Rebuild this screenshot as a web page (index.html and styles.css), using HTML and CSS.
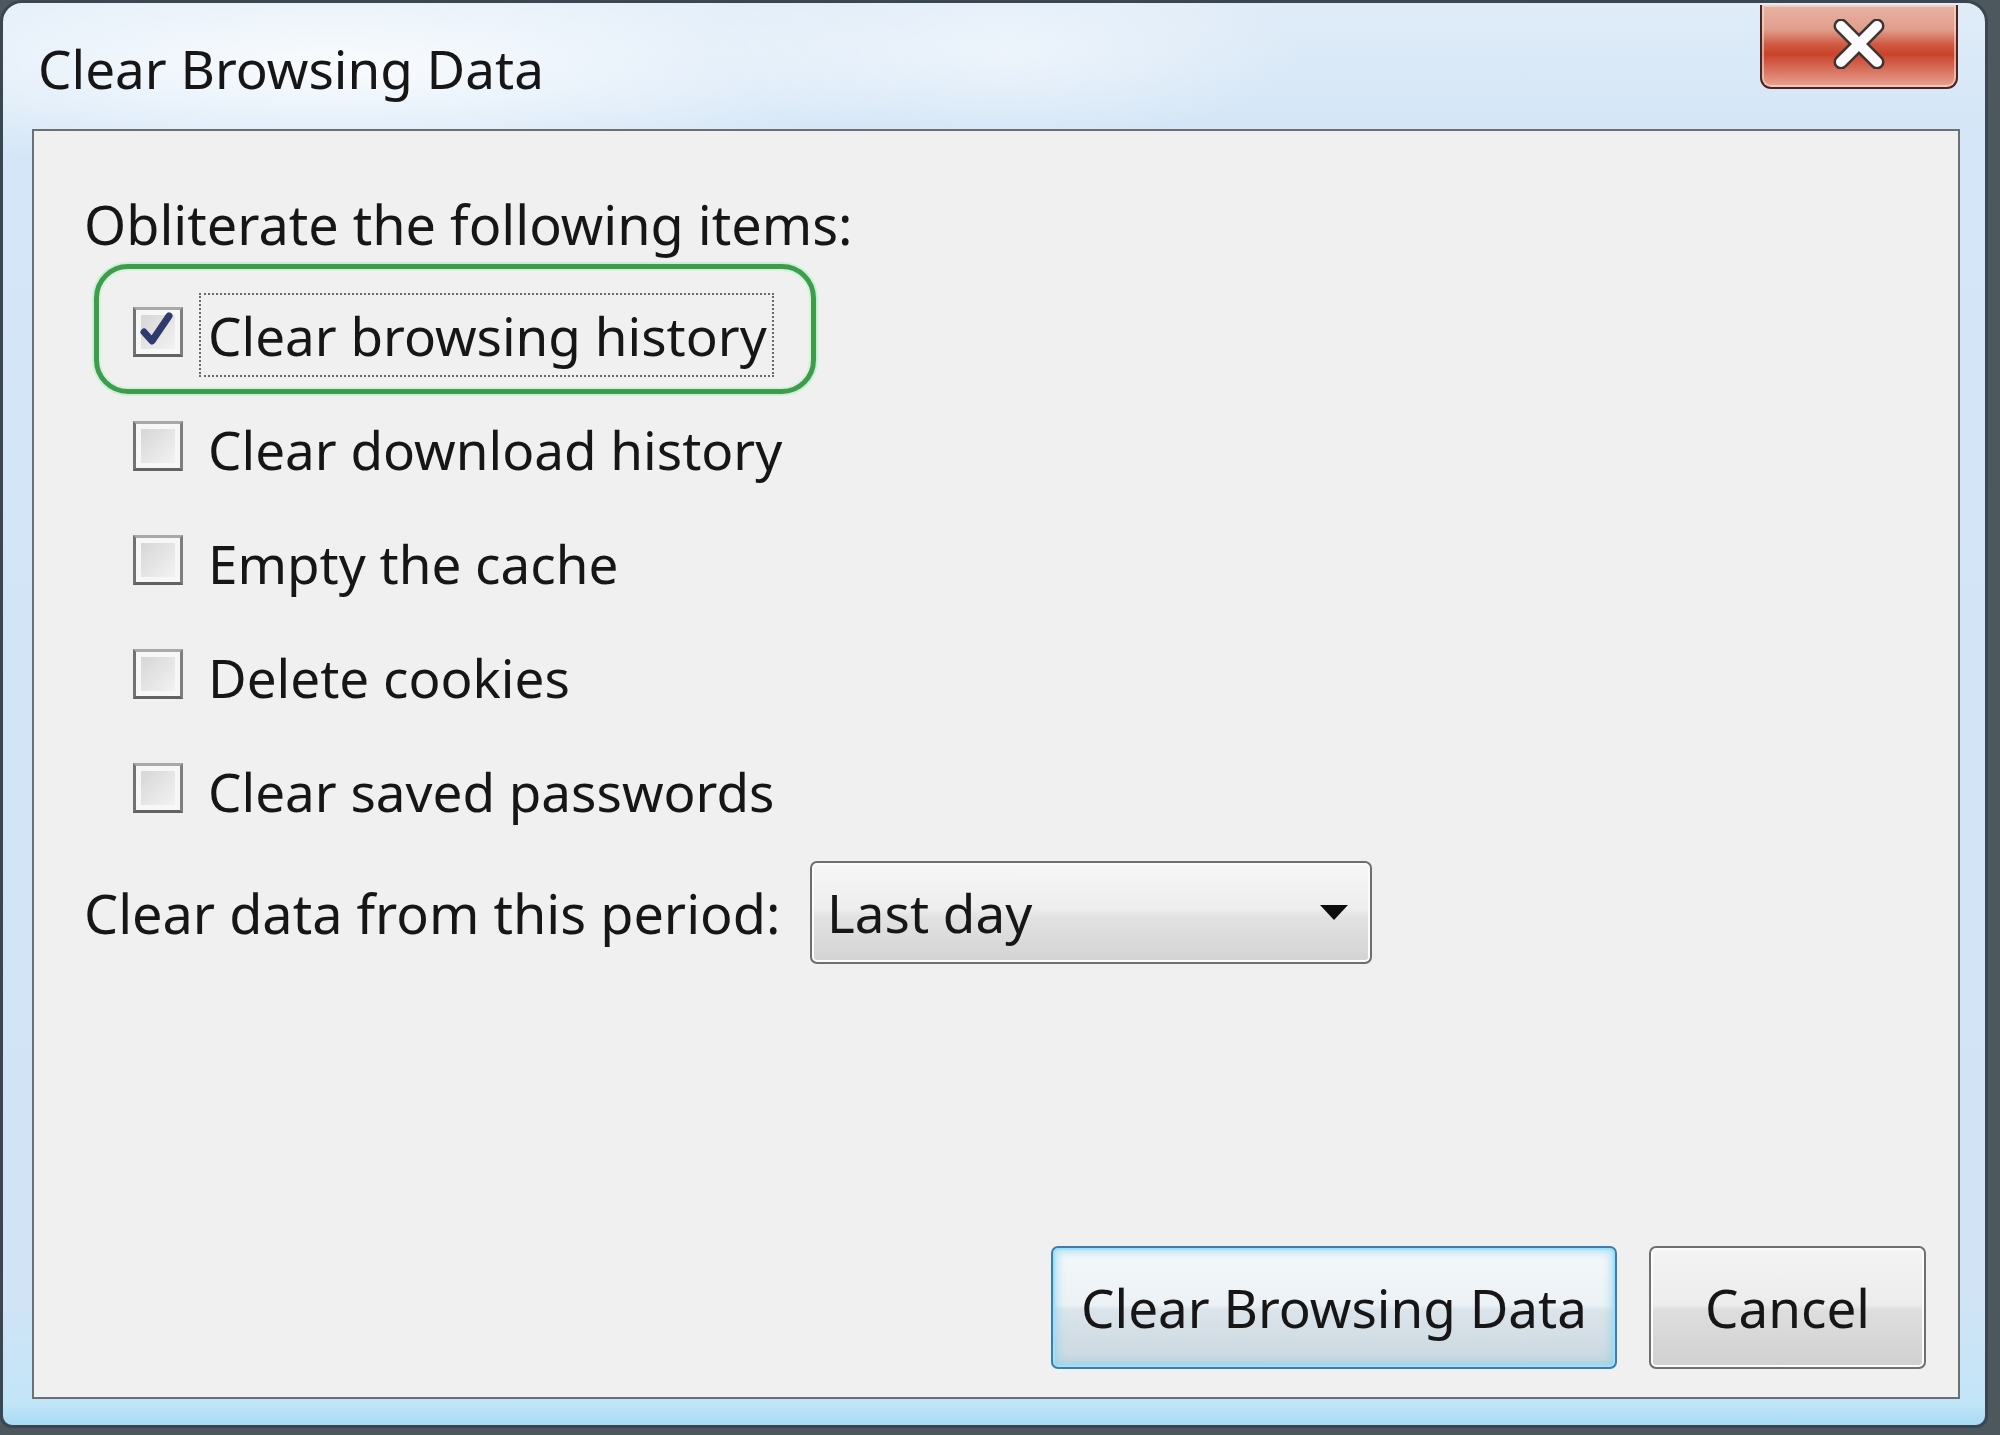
FILE: index.html
```html
<!DOCTYPE html>
<html lang="en">
<head>
<meta charset="utf-8">
<title>Clear Browsing Data</title>
<link rel="stylesheet" href="styles.css">
</head>
<body>
<div class="window">
  <div class="titlebar">
    <div class="title">Clear Browsing Data</div>
    <div class="close">
      <svg class="close-x" width="60" height="50" viewBox="0 0 60 50">
        <path d="M12 7 L48 43 M48 7 L12 43" stroke="#3c3434" stroke-width="15" stroke-linecap="round" fill="none"/>
        <path d="M12 7 L48 43 M48 7 L12 43" stroke="#fbfbfb" stroke-width="10" stroke-linecap="round" fill="none"/>
      </svg>
    </div>
  </div>
  <div class="panel">
    <div class="heading">Obliterate the following items:</div>
    <ul class="options">
      <li class="option">
        <span class="highlight"></span>
        <span class="box">
          <svg width="44" height="44" viewBox="0 0 44 44"><path d="M8 22 L16 31 L33 6" stroke="#2e3b6c" stroke-width="7" stroke-linecap="round" stroke-linejoin="round" fill="none"/></svg>
        </span>
        <span class="label focus">Clear browsing history</span>
      </li>
      <li class="option"><span class="box"></span><span class="label">Clear download history</span></li>
      <li class="option"><span class="box"></span><span class="label">Empty the cache</span></li>
      <li class="option"><span class="box"></span><span class="label">Delete cookies</span></li>
      <li class="option"><span class="box"></span><span class="label">Clear saved passwords</span></li>
    </ul>
    <div class="period">
      <span class="period-label">Clear data from this period:</span>
      <div class="select">
        <span class="select-value">Last day</span>
        <svg class="arrow" width="28" height="15" viewBox="0 0 28 15"><path d="M0 0 L28 0 L14 15 Z" fill="#0c0c0c"/></svg>
      </div>
    </div>
    <div class="buttons">
      <button class="btn btn-default">Clear Browsing Data</button>
      <button class="btn btn-cancel">Cancel</button>
    </div>
  </div>
</div>
</body>
</html>
```

FILE: styles.css
```css
* { box-sizing: border-box; }
html, body { margin: 0; padding: 0; }
body {
  width: 2000px;
  height: 1435px;
  overflow: hidden;
  background: #4c585d;
  font-family: "Noto Sans", "Open Sans", sans-serif;
  color: #161616;
}
.window {
  width: 1988px;
  height: 1428px;
  border: 3px solid #3a4650;
  border-radius: 22px 22px 12px 12px;
  background:
    radial-gradient(ellipse 620px 110px at 330px 62px, rgba(255,255,255,0.85), rgba(255,255,255,0) 100%),
    radial-gradient(ellipse 300px 90px at 1000px 50px, rgba(255,255,255,0.5), rgba(255,255,255,0) 100%),
    linear-gradient(to bottom, #e0ecf8 0, #d4e6f7 126px, #d0e4f6 1300px, #c2e5f8 1400px, #a9dbf5 100%);
  display: flex;
  flex-direction: column;
  overflow: hidden;
}
.titlebar {
  height: 126px;
  flex: none;
  display: flex;
  justify-content: space-between;
  align-items: flex-start;
  padding-left: 35px;
  padding-right: 27px;
}
.title {
  font-size: 53px;
  line-height: 64px;
  padding-top: 34px;
  color: #161616;
}
.close {
  width: 198px;
  height: 84px;
  margin-top: 2px;
  border: 2px solid #4a2622;
  border-top: none;
  border-radius: 0 0 11px 11px;
  background: linear-gradient(to bottom, #e8b2a4 0%, #e29e8c 30%, #cf5a42 48%, #c9432a 60%, #d8735e 80%, #e9a595 100%);
  box-shadow: inset 0 0 0 2px rgba(255,225,215,0.55);
  display: flex;
  align-items: center;
  justify-content: center;
}
.close-x { margin-top: -4px; }
.panel {
  height: 1270px;
  margin: 0 25px 0 29px;
  border: 2px solid #6b7075;
  background: #f0f0f0;
  display: flex;
  flex-direction: column;
  padding: 58px 32px 28px 50px;
}
.heading {
  font-size: 54px;
  line-height: 70px;
}
.options {
  list-style: none;
  margin: 19px 0 0;
  padding: 0;
}
.option {
  position: relative;
  height: 114px;
  display: flex;
  align-items: center;
  padding-left: 49px;
  font-size: 53px;
}
.box {
  width: 50px;
  height: 50px;
  flex: none;
  border: 3px solid;
  border-color: #a8a8a8 #7e7e7e #626262 #727272;
  background: linear-gradient(135deg, #d2d2d2 0%, #e8e8e8 60%, #f6f6f6 100%);
  box-shadow: inset 0 0 0 5px #f7f7f7;
  display: flex;
  align-items: center;
  justify-content: center;
  margin-top: -6px;
}
.label {
  margin-left: 16px;
  height: 84px;
  line-height: 82px;
  padding: 0 5px 0 7px;
  border: 2px dotted transparent;
}
.label.focus { border-color: #6a6a6a; }
.highlight {
  position: absolute;
  left: 10px;
  top: -14px;
  width: 722px;
  height: 130px;
  border: 5px solid #3d9d4d;
  border-radius: 34px;
  box-shadow: 0 0 0 2px #c9f0d2, inset 0 0 0 2px #d4f3da;
}
.period {
  margin-top: 13px;
  height: 103px;
  display: flex;
  align-items: center;
  font-size: 54px;
}
.period-label { width: 726px; flex: none; }
.select {
  width: 562px;
  height: 103px;
  border: 2px solid #6e6e6e;
  border-radius: 7px;
  background: linear-gradient(to bottom, #f6f6f6 0%, #eeeeee 45%, #e2e2e2 55%, #d3d3d3 100%);
  box-shadow: inset 0 0 0 2px #fbfbfb;
  display: flex;
  align-items: center;
  justify-content: space-between;
  padding: 0 22px 0 15px;
  font-size: 53px;
}
.select-value { line-height: 64px; }
.buttons {
  margin-top: auto;
  display: flex;
  justify-content: flex-end;
  gap: 32px;
}
.btn {
  height: 123px;
  font-family: "Noto Sans", "Open Sans", sans-serif;
  font-size: 53px;
  color: #161616;
  border-radius: 7px;
  padding: 0;
}
.btn-default {
  width: 566px;
  border: 2px solid #3b7eb0;
  background: linear-gradient(to bottom, #f4f8fb 0%, #ebf1f5 48%, #dbe4ea 52%, #c9d7df 100%);
  box-shadow: inset 0 0 0 2px #9fe0f8, inset 0 0 8px 4px rgba(110,205,240,0.55);
}
.btn-cancel {
  width: 277px;
  border: 2px solid #707070;
  background: linear-gradient(to bottom, #f4f4f4 0%, #ececec 48%, #dedede 52%, #d0d0d0 100%);
  box-shadow: inset 0 0 0 2px #fcfcfc;
}
```
